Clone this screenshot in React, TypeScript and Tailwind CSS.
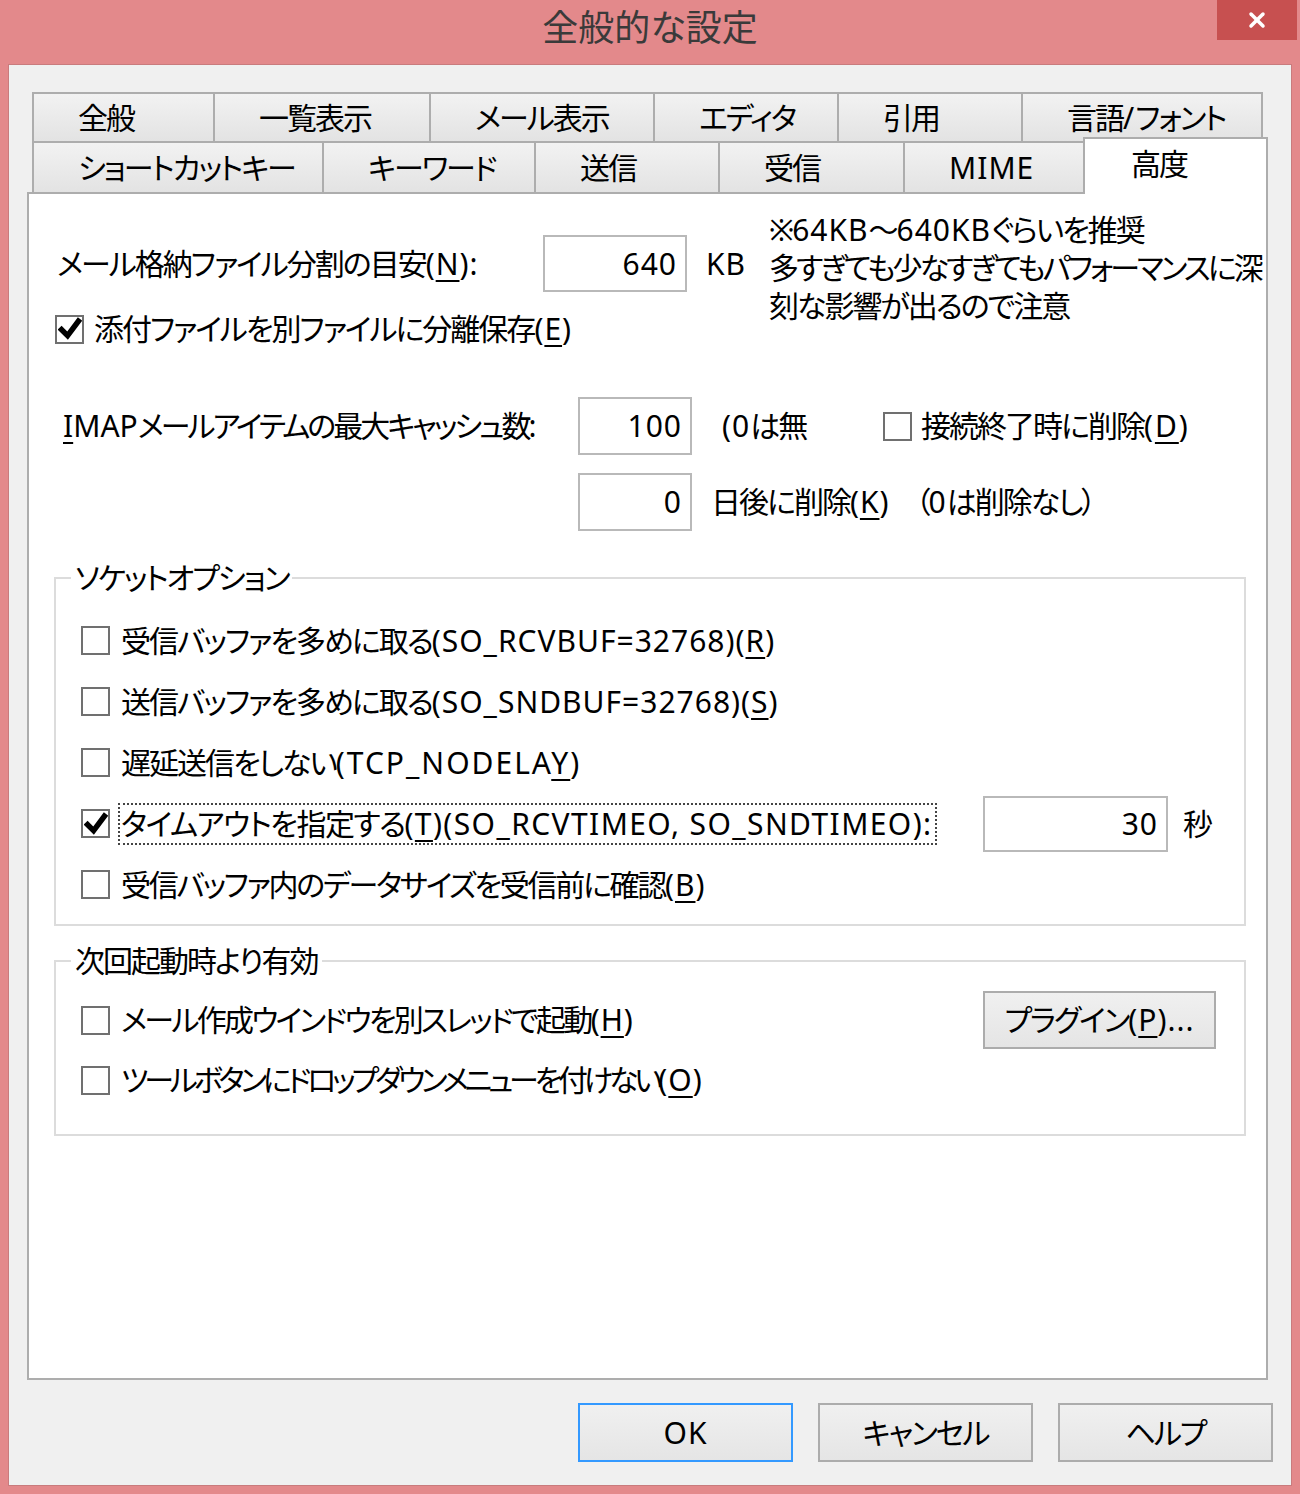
import { X } from "lucide-react";

const font =
  "font-['Noto_Sans','Noto_Sans_CJK_JP',sans-serif] [font-feature-settings:'palt']";

const row1 = [
  { label: "全般", w: 181 },
  { label: "一覧表示", w: 216 },
  { label: "メール表示", w: 224 },
  { label: "エディタ", w: 184 },
  { label: "引用", w: 184 },
  { label: "言語/フォント", w: 242 },
];

const row2 = [
  { label: "ショートカットキー", w: 290 },
  { label: "キーワード", w: 212 },
  { label: "送信", w: 184 },
  { label: "受信", w: 185 },
  { label: "MIME", w: 180 },
];

function Key({ k }: { k: string }) {
  return <u className="underline-offset-[5px] decoration-2">{k}</u>;
}

// Latin runs get wider spacing than kana/kanji; "&X" marks an underlined access key
function T({ s, latin = "tracking-[1px]" }: { s: string; latin?: string }) {
  return (
    <>
      {s.split(/([\x00-\x7f]+)/).map((part, i) => {
        if (!part) return null;
        if (!/^[\x00-\x7f]+$/.test(part)) return <span key={i}>{part}</span>;
        const m = part.split(/&(.)/);
        return (
          <span key={i} className={latin}>
            {m.map((p, j) => (j % 2 ? <Key key={j} k={p} /> : p))}
          </span>
        );
      })}
    </>
  );
}

function Tab({ label, w, last }: { label: string; w: number; last?: boolean }) {
  return (
    <div
      className={`flex h-full shrink-0 items-center border-t-2 border-l-2 border-[#adadad] bg-gradient-to-b from-[#f2f2f2] to-[#e3e3e3] pl-[44px] ${last ? "border-r-2" : ""}`}
      style={{ width: w }}
    >
      <T s={label} />
    </div>
  );
}

function Check({ checked }: { checked?: boolean }) {
  return (
    <div className="flex h-[29px] w-[29px] shrink-0 items-center justify-center border-2 border-[#707070] bg-white">
      {checked && (
        <svg viewBox="0 0 20 20" className="h-[24px] w-[24px]">
          <path
            d="M3 10.5 L8 15.5 L17 3.5"
            fill="none"
            stroke="#000"
            strokeWidth={4.6}
            strokeLinecap="square"
          />
        </svg>
      )}
    </div>
  );
}

function Field({ value, w, h }: { value: string; w: number; h: number }) {
  return (
    <div
      className="flex shrink-0 items-center justify-end border-2 border-[#b9b9b9] bg-white pr-[8px] tracking-[1px]"
      style={{ width: w, height: h }}
    >
      {value}
    </div>
  );
}

function Button({
  label,
  w,
  h,
  focus,
}: {
  label: string;
  w: number;
  h: number;
  focus?: boolean;
}) {
  return (
    <div
      className={`flex shrink-0 items-center justify-center border-2 bg-gradient-to-b from-[#f0f0f0] to-[#e5e5e5] ${focus ? "border-[#3399ff]" : "border-[#acacac]"}`}
      style={{ width: w, height: h }}
    >
      <T s={label} />
    </div>
  );
}

function OptionRow({
  checked,
  children,
  h,
}: {
  checked?: boolean;
  children: React.ReactNode;
  h: number;
}) {
  return (
    <div className="flex items-center pl-[25px]" style={{ height: h }}>
      <Check checked={checked} />
      {children}
    </div>
  );
}

export default function App() {
  return (
    <div
      className={`flex h-[1494px] w-[1300px] flex-col overflow-hidden whitespace-nowrap bg-[#e3898b] px-[8px] pb-[8px] text-[30px] leading-[32px] tracking-[-2px] text-black ${font}`}
    >
      {/* Title bar */}
      <div className="relative flex h-[64px] shrink-0 items-center justify-center">
        <span className="-mt-[8px] text-[36px] tracking-normal text-[#3a3a3a]">全般的な設定</span>
        <div className="absolute top-0 -right-[5px] flex h-[40px] w-[80px] items-center justify-center bg-[#c75050]">
          <X className="h-[24px] w-[24px] text-white" strokeWidth={3.5} />
        </div>
      </div>

      {/* Client area */}
      <div className="flex flex-1 flex-col border border-[#c97b7d] bg-[#f0f0f0] pt-[27px] pr-[23px] pl-[18px]">
        {/* Tabs */}
        <div className="ml-[5px] flex h-[49px]">
          {row1.map((t, i) => (
            <Tab key={t.label} label={t.label} w={t.w} last={i === row1.length - 1} />
          ))}
        </div>
        <div className="ml-[5px] flex h-[51px] items-end">
          {row2.map((t) => (
            <Tab key={t.label} label={t.label} w={t.w} />
          ))}
          <div className="relative z-10 -mb-[2px] flex h-[57px] w-[185px] shrink-0 items-center border-x-2 border-t-2 border-[#adadad] bg-white pb-[6px] pl-[46px]">
            高度
          </div>
        </div>

        {/* Panel */}
        <div className="h-[1188px] border-2 border-[#adadad] bg-white">
          {/* split size */}
          <div className="flex pt-[17px]">
            <div className="ml-[26px] flex flex-col pt-[24px]">
              <div className="flex h-[57px] items-center">
                <div className="w-[488px] pl-[2px]">
                  <T s="メール格納ファイル分割の目安(&N):" />
                </div>
                <Field value="640" w={144} h={57} />
                <div className="w-[82px] pl-[19px] tracking-[1px]">KB</div>
              </div>
              <div className="mt-[23px] flex h-[28px] items-center">
                <Check checked />
                <span className="ml-[10px]">
                  <T s="添付ファイルを別ファイルに分離保存(&E)" />
                </span>
              </div>
            </div>
            <div className="leading-[38px]">
              <div>
                <T s="※64KB～640KBぐらいを推奨" />
              </div>
              <div className="tracking-[-3px]">多すぎても少なすぎてもパフォーマンスに深</div>
              <div>刻な影響が出るので注意</div>
            </div>
          </div>

          {/* IMAP cache */}
          <div className="mt-[54px] flex h-[58px] items-center">
            <div className="w-[549px] pl-[34px] tracking-[-3px]">
              <T s="&IMAPメールアイテムの最大キャッシュ数:" latin="tracking-[0px]" />
            </div>
            <Field value="100" w={114} h={58} />
            <div className="w-[191px] pl-[30px]">
              <T s="(0は無" />
            </div>
            <Check />
            <span className="ml-[9px]">
              <T s="接続終了時に削除(&D)" latin="tracking-[2px]" />
            </span>
          </div>
          <div className="mt-[18px] flex h-[58px] items-center pl-[549px]">
            <Field value="0" w={114} h={58} />
            <span className="ml-[19px]">
              <T s="日後に削除(&K)" />
            </span>
            <span className="ml-[26px]">
              <T s="（0は削除なし）" />
            </span>
          </div>

          {/* Socket options */}
          <fieldset className="mt-[31px] mr-[20px] ml-[25px] border-2 border-[#dcdcdc] pt-[16px] pb-[9px]">
            <legend className="ml-[15px] px-[4px]">ソケットオプション</legend>
            <OptionRow h={61}>
              <span className="ml-[11px]">
                <T s="受信バッファを多めに取る(SO_RCVBUF=32768)(&R)" />
              </span>
            </OptionRow>
            <OptionRow h={61}>
              <span className="ml-[11px]">
                <T s="送信バッファを多めに取る(SO_SNDBUF=32768)(&S)" />
              </span>
            </OptionRow>
            <OptionRow h={61}>
              <span className="ml-[11px]">
                <T s="遅延送信をしない(TCP_NODELA&Y)" latin="tracking-[2px]" />
              </span>
            </OptionRow>
            <OptionRow h={61} checked>
              <span className="ml-[8px] flex h-[42px] items-center border-2 border-dotted border-[#444] pr-[2px] pl-[1px] tracking-[-1.5px]">
                <T
                  s="タイムアウトを指定する(&T)(SO_RCVTIMEO, SO_SNDTIMEO):"
                  latin="tracking-[1.4px]"
                />
              </span>
              <div className="ml-auto flex w-[261px] items-center">
                <Field value="30" w={185} h={56} />
                <span className="ml-[15px]">秒</span>
              </div>
            </OptionRow>
            <OptionRow h={61}>
              <span className="ml-[11px] tracking-[-2.3px]">
                <T s="受信バッファ内のデータサイズを受信前に確認(&B)" />
              </span>
            </OptionRow>
          </fieldset>

          {/* Next startup */}
          <fieldset className="mt-[19px] mr-[20px] ml-[25px] border-2 border-[#dcdcdc] pt-[13px] pb-[24px]">
            <legend className="ml-[15px] px-[4px]">次回起動時より有効</legend>
            <OptionRow h={60}>
              <span className="ml-[11px] tracking-[-2.7px]">
                <T s="メール作成ウインドウを別スレッドで起動(&H)" />
              </span>
              <div className="mr-[28px] ml-auto">
                <Button label="プラグイン(&P)..." w={233} h={58} />
              </div>
            </OptionRow>
            <OptionRow h={60}>
              <span className="ml-[11px] tracking-[-4.2px]">
                <T s="ツールボタンにドロップダウンメニューを付けない(&O)" />
              </span>
            </OptionRow>
          </fieldset>
        </div>

        {/* Dialog buttons */}
        <div className="mt-[23px] -mr-[5px] flex justify-end gap-[25px]">
          <Button label="OK" w={215} h={59} focus />
          <Button label="キャンセル" w={215} h={59} />
          <Button label="ヘルプ" w={215} h={59} />
        </div>
      </div>
    </div>
  );
}
